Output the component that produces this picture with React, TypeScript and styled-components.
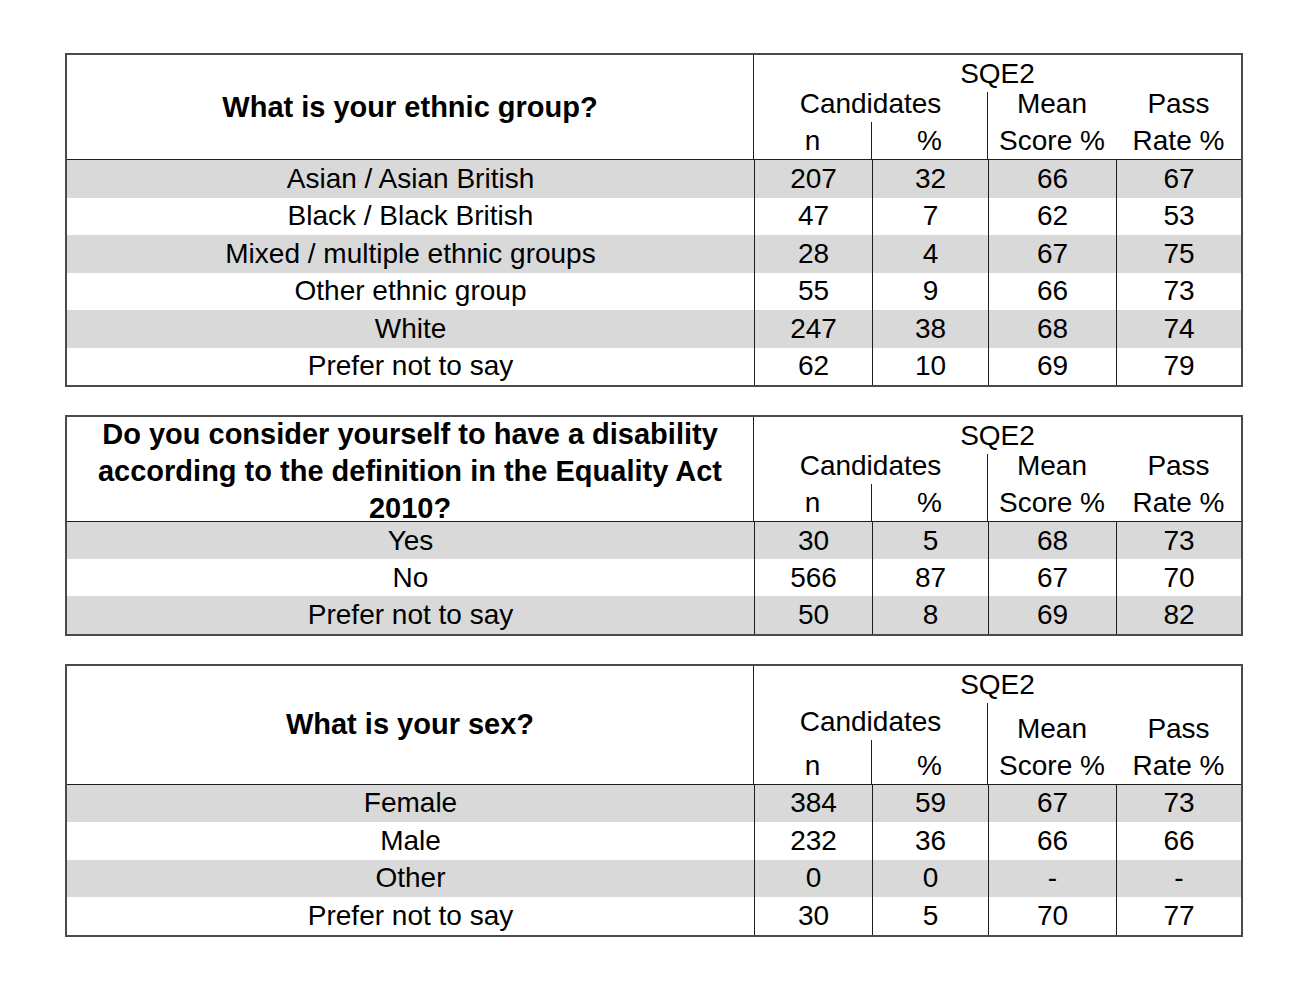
import React from "react";
import styled, { createGlobalStyle } from "styled-components";

const GlobalStyle = createGlobalStyle`
  html, body {
    margin: 0;
    padding: 0;
    background: #ffffff;
  }
  body {
    font-family: "Liberation Sans", Arial, sans-serif;
    color: #000;
  }
  * { box-sizing: border-box; }
`;

const COLS = "687px 118px 116px 128px 125px";

const Page = styled.div`
  padding: 53px 0 0 65px;
  width: 1306px;
  min-height: 986px;
`;

const Stack = styled.div`
  display: flex;
  flex-direction: column;
  gap: 28px;
`;

const Table = styled.div`
  width: 1178px;
  border: 2px solid #4a4a4a;
  font-size: 28px;
  background: #fff;
`;

const Header = styled.div<{ $rows: string }>`
  display: grid;
  grid-template-columns: ${COLS};
  grid-template-rows: ${(p) => p.$rows};
  border-bottom: 1px solid #1e1e1e;
`;

const Question = styled.div<{ $pad?: number }>`
  grid-column: 1;
  grid-row: 1 / 4;
  display: flex;
  align-items: center;
  justify-content: center;
  text-align: center;
  font-weight: 700;
  font-size: 29px;
  line-height: 37px;
  padding-top: ${(p) => p.$pad ?? 0}px;
  border-right: 1px solid #1e1e1e;
  overflow: visible;
  white-space: pre-line;
`;

const HeadCell = styled.div<{ $col: string; $row: string; $line?: boolean }>`
  grid-column: ${(p) => p.$col};
  grid-row: ${(p) => p.$row};
  display: flex;
  flex-direction: column;
  justify-content: flex-end;
  align-items: center;
  text-align: center;
  line-height: 37px;
  white-space: nowrap;
  overflow: visible;
  min-height: 0;
  border-right: ${(p) => (p.$line ? "1px solid #1e1e1e" : "none")};
`;

const Row = styled.div<{ $shade: boolean; $h: number }>`
  display: grid;
  grid-template-columns: ${COLS};
  height: ${(p) => p.$h}px;
  background: ${(p) => (p.$shade ? "#d9d9d9" : "#ffffff")};
`;

const Cell = styled.div<{ $first?: boolean }>`
  display: flex;
  align-items: center;
  justify-content: center;
  white-space: nowrap;
  line-height: 1;
  border-left: ${(p) => (p.$first ? "none" : "1px solid #1e1e1e")};
`;

type DataRow = [string, string, string, string, string];

interface TableSpec {
  question: string;
  rows: string;
  rowH: number;
  qPad?: number;
  data: DataRow[];
}

const tables: TableSpec[] = [
  {
    question: "What is your ethnic group?",
    rows: "37px 30px 37px",
    rowH: 37.5,
    data: [
      ["Asian / Asian British", "207", "32", "66", "67"],
      ["Black / Black British", "47", "7", "62", "53"],
      ["Mixed / multiple ethnic groups", "28", "4", "67", "75"],
      ["Other ethnic group", "55", "9", "66", "73"],
      ["White", "247", "38", "68", "74"],
      ["Prefer not to say", "62", "10", "69", "79"],
    ],
  },
  {
    question:
      "Do you consider yourself to have a disability\naccording to the definition in the Equality Act\n2010?",
    rows: "37px 30px 37px",
    rowH: 37.2,
    qPad: 4,
    data: [
      ["Yes", "30", "5", "68", "73"],
      ["No", "566", "87", "67", "70"],
      ["Prefer not to say", "50", "8", "69", "82"],
    ],
  },
  {
    question: "What is your sex?",
    rows: "37px 37px 44px",
    rowH: 37.5,
    data: [
      ["Female", "384", "59", "67", "73"],
      ["Male", "232", "36", "66", "66"],
      ["Other", "0", "0", "-", "-"],
      ["Prefer not to say", "30", "5", "70", "77"],
    ],
  },
];

const StatTable: React.FC<{ spec: TableSpec }> = ({ spec }) => (
  <Table>
    <Header $rows={spec.rows}>
      <Question $pad={spec.qPad}>{spec.question}</Question>
      <HeadCell $col="2 / 6" $row="1">SQE2</HeadCell>
      <HeadCell $col="2 / 4" $row="2" $line>Candidates</HeadCell>
      <HeadCell $col="2" $row="3" $line>n</HeadCell>
      <HeadCell $col="3" $row="3" $line>%</HeadCell>
      <HeadCell $col="4" $row="2 / 4">
        <span>Mean</span>
        <span>Score %</span>
      </HeadCell>
      <HeadCell $col="5" $row="2 / 4">
        <span>Pass</span>
        <span>Rate %</span>
      </HeadCell>
    </Header>
    {spec.data.map((r, i) => (
      <Row key={r[0]} $shade={i % 2 === 0} $h={spec.rowH}>
        {r.map((v, j) => (
          <Cell key={j} $first={j === 0}>
            {v}
          </Cell>
        ))}
      </Row>
    ))}
  </Table>
);

export default function App() {
  return (
    <>
      <GlobalStyle />
      <Page>
        <Stack>
          {tables.map((t) => (
            <StatTable key={t.question} spec={t} />
          ))}
        </Stack>
      </Page>
    </>
  );
}
